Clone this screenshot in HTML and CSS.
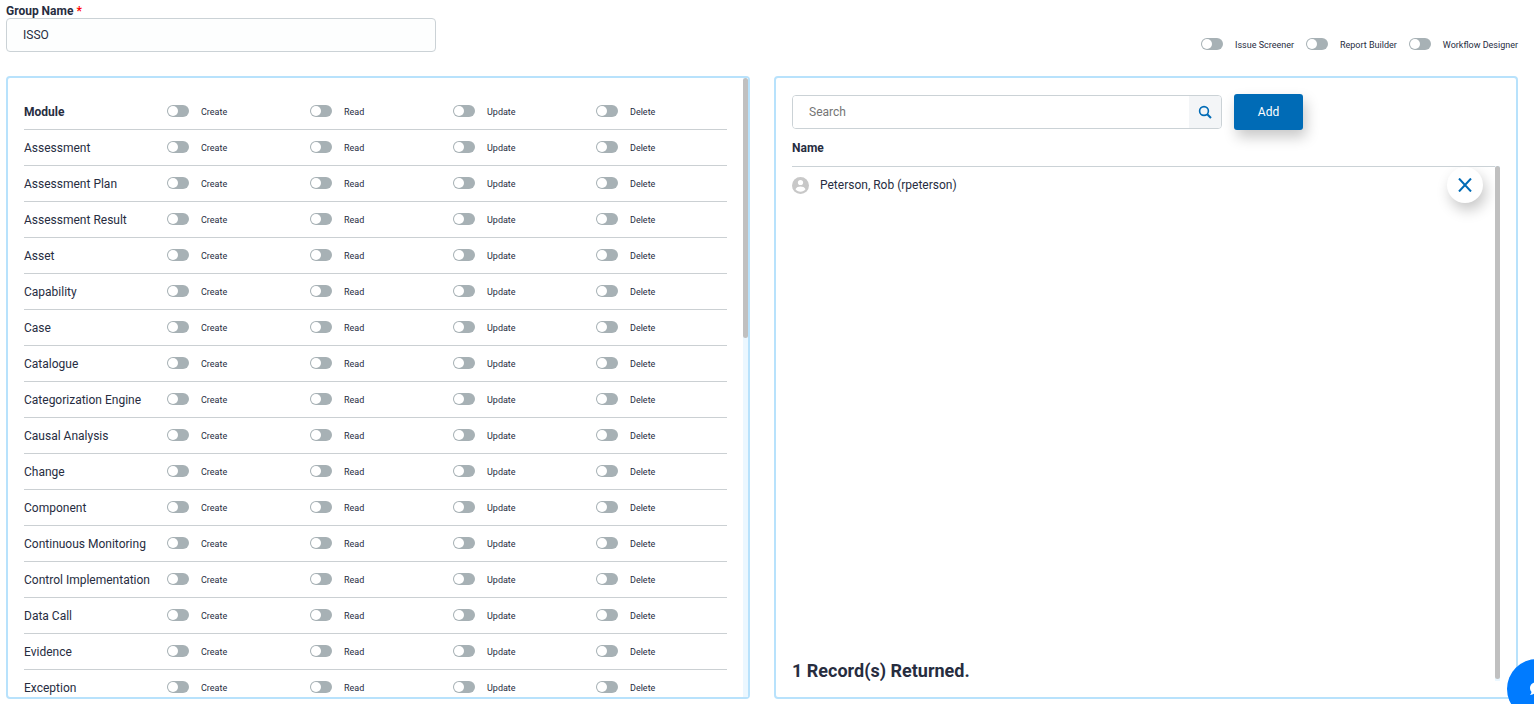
FILE: index.html
```html
<!DOCTYPE html>
<html lang="en">
<head>
    <meta charset="UTF-8">
    <meta name="viewport" content="width=device-width, initial-scale=1.0">
    <title>Group Permissions</title>
    <link rel="stylesheet" href="styles.css">
</head>
<body>
    <header class="group-header">
        <div class="group-name">
            <label for="groupName">Group Name <span class="required">*</span></label>
            <input type="text" id="groupName" class="text-input" value="ISSO">
        </div>
        <div class="group-options">
            <label class="toggle"><input type="checkbox"><span>Issue Screener</span></label>
            <label class="toggle"><input type="checkbox"><span>Report Builder</span></label>
            <label class="toggle"><input type="checkbox"><span>Workflow Designer</span></label>
        </div>
    </header>

    <main class="panels">
        <section class="panel modules-panel">
            <div class="modules-scroll">
                <table class="modules">
                    <thead id="modulesHead"></thead>
                    <tbody id="modulesBody"></tbody>
                </table>
            </div>
            <div class="scrollbar"><div class="thumb modules-thumb"></div></div>
        </section>

        <section class="panel users-panel">
            <form class="search-row">
                <div class="search-box">
                    <input type="text" class="search-input" placeholder="Search" aria-label="Search">
                    <button type="button" class="search-button" aria-label="Search users">
                        <svg width="14" height="14" viewBox="0 0 14 14" fill="none" stroke="currentColor" stroke-width="1.6">
                            <circle cx="6" cy="6" r="4.400"/>
                            <path d="M9.200 9.200l3.800 3.800" stroke-width="2"/>
                        </svg>
                    </button>
                </div>
                <button type="button" class="add-button">Add</button>
            </form>
            <h2 class="users-title">Name</h2>
            <div class="users-list">
                <div class="users-scroll">
                    <ul class="users">
                        <li class="user">
                            <svg class="avatar" width="17" height="17" viewBox="0 0 17 17">
                                <circle cx="8.5" cy="8.5" r="8.5" fill="#c8c8c8"/>
                                <circle cx="8.5" cy="5.500" r="2.600" fill="#fff"/>
                                <path d="M3.500 12.200c.6-2 3.300-2.700 5-2.700s4.400.7 5 2.700c-1.100 1.600-2.900 2.500-5 2.500s-3.900-.9-5-2.500z" fill="#fff"/>
                            </svg>
                            <span class="user-name">Peterson, Rob (rpeterson)</span>
                            <button type="button" class="remove-button" aria-label="Remove user">
                                <svg width="14" height="14" viewBox="0 0 14 14" fill="none" stroke="currentColor" stroke-width="2">
                                    <path d="M1 0.500l12 13M13 0.500l-12 13"/>
                                </svg>
                            </button>
                        </li>
                    </ul>
                    <p class="record-count">1 Record(s) Returned.</p>
                </div>
                <div class="scrollbar"><div class="thumb users-thumb"></div></div>
            </div>
        </section>
    </main>

    <button type="button" class="chat-button" aria-label="Chat">
        <svg width="14" height="14" viewBox="0 0 14 14" fill="#fff">
            <path d="M7 0c3.900 0 7 2.600 7 6s-3.100 6-7 6c-.9 0-1.800-.1-2.600-.4C3.200 12.500 1.600 13 0 13c.9-.9 1.400-1.900 1.500-3C.6 8.900 0 7.500 0 6c0-3.400 3.100-6 7-6z"/>
        </svg>
    </button>

    <script src="script.js"></script>
</body>
</html>
```

FILE: styles.css
```css
* {
    box-sizing: border-box;
}
body {
    margin: 0;
    padding: 4px 16px 5px 6px;
    height: 100vh;
    display: flex;
    flex-direction: column;
    gap: 24px;
    font-family: Roboto, Arial, sans-serif;
    font-size: 12px;
    line-height: 14px;
    color: #272d3f;
    background: #fff;
}
input, button {
    font-family: inherit;
    font-size: 12px;
    color: inherit;
}
button {
    padding: 0;
    border: none;
    cursor: pointer;
}

/* Header */
.group-header {
    display: flex;
    justify-content: space-between;
    align-items: flex-end;
}
.group-name {
    flex: 0 1 430px;
    font-weight: bold;
}
.group-name label {
    display: block;
}
.required {
    color: #f00;
}
.text-input {
    display: block;
    width: 100%;
    height: 34px;
    padding: 0 16px;
    border: 1px solid #cbd2d6;
    border-radius: 4px;
    background: #fdfefe;
}
.group-options {
    display: flex;
    gap: 12px;
}

/* Toggles */
.toggle {
    display: inline-flex;
    align-items: center;
    gap: 12px;
    font-size: 9px;
    line-height: 14px;
    cursor: pointer;
}
.toggle input {
    appearance: none;
    width: 22px;
    height: 12px;
    margin: 0 0 2px;
    padding: 1px;
    border-radius: 6px;
    background: #a7b1b5;
    cursor: pointer;
}
.toggle input::before {
    content: "";
    display: block;
    width: 10px;
    height: 10px;
    border-radius: 50%;
    background: #fff;
}
.toggle input:checked {
    background: #006bb6;
}
.toggle input:checked::before {
    margin-left: auto;
}

/* Panels */
.panels {
    flex: 1;
    min-height: 0;
    display: grid;
    grid-template-columns: 1fr 1fr;
    gap: 24px;
}
.panel {
    display: flex;
    min-height: 0;
    border: 2px solid #b8e2fc;
    border-radius: 4px;
}
.modules-scroll {
    flex: 1;
    padding: 16px 16px 0;
    overflow-y: auto;
    scrollbar-width: none;
}
.modules, .modules thead, .modules tbody {
    display: block;
}
.modules tr {
    display: grid;
    grid-template-columns: repeat(5, 1fr);
    gap: 12px;
    align-items: center;
    height: 36px;
    border-bottom: 1px solid #cbd0d3;
}
.modules th, .modules td {
    display: flex;
    padding: 0;
    font-weight: normal;
    text-align: left;
    white-space: nowrap;
}
.modules thead .module-name {
    font-weight: bold;
}

/* Scrollbars */
.scrollbar {
    width: 5px;
    background: #ebf7ff;
}
.thumb {
    border-radius: 3px;
    background: #c0c0c0;
}
.modules-thumb {
    height: 42%;
}
.users-thumb {
    height: calc(100% - 2px);
}

/* Users */
.users-panel {
    flex-direction: column;
    padding: 16px;
}
.search-row {
    display: flex;
    align-items: center;
    gap: 12px;
}
.search-box {
    flex: 0 1 430px;
    display: flex;
    height: 34px;
    border: 1px solid #cbd2d6;
    border-radius: 4px;
    overflow: hidden;
}
.search-input {
    flex: 1;
    min-width: 0;
    padding: 0 16px;
    border: none;
}
.search-input::placeholder {
    color: #757575;
}
.search-button {
    width: 32px;
    display: flex;
    align-items: center;
    justify-content: center;
    color: #006bb6;
    background: #f3f5f7;
}
.add-button {
    width: 69px;
    height: 36px;
    border-radius: 3px;
    color: #fff;
    background: #006bb6;
    box-shadow: 3px 7px 14px rgba(0, 0, 0, 0.22);
}
.users-title {
    margin: 11px 0;
    font-size: 12px;
    line-height: 14px;
}
.users-list {
    flex: 1;
    min-height: 0;
    display: flex;
}
.users-scroll {
    flex: 1;
    display: flex;
    flex-direction: column;
    justify-content: space-between;
    border-top: 1px solid #cbd2d6;
    overflow-y: auto;
    scrollbar-width: none;
}
.users {
    margin: 0;
    padding: 0;
    list-style: none;
}
.user {
    display: flex;
    align-items: center;
    height: 36px;
    padding-right: 12px;
}
.user-name {
    flex: 1;
    margin-left: 11px;
}
.remove-button {
    width: 36px;
    height: 36px;
    display: flex;
    align-items: center;
    justify-content: center;
    border-radius: 50%;
    color: #006bb6;
    background: #fff;
    box-shadow: 3px 7px 14px rgba(0, 0, 0, 0.22);
}
.record-count {
    margin: 0;
    font-size: 18px;
    font-weight: bold;
    line-height: 20px;
}

.chat-button {
    position: fixed;
    right: -33px;
    bottom: -15px;
    width: 60px;
    height: 60px;
    display: flex;
    align-items: center;
    justify-content: center;
    border-radius: 50%;
    background: #007bff;
}
```

FILE: script.js
```js
const modules = [
    'Assessment', 'Assessment Plan', 'Assessment Result', 'Asset', 'Capability',
    'Case', 'Catalogue', 'Categorization Engine', 'Causal Analysis', 'Change',
    'Component', 'Continuous Monitoring', 'Control Implementation', 'Data Call',
    'Evidence', 'Exception'
];
const permissions = ['Create', 'Read', 'Update', 'Delete'];

function createRow(name, cellType) {
    const row = document.createElement('tr');
    const title = document.createElement('th');
    title.className = 'module-name';
    title.textContent = name;
    row.appendChild(title);

    permissions.forEach(function (permission) {
        const cell = document.createElement(cellType);
        cell.innerHTML = '<label class="toggle"><input type="checkbox"><span>' + permission + '</span></label>';
        row.appendChild(cell);
    });
    return row;
}

document.getElementById('modulesHead').appendChild(createRow('Module', 'th'));

const body = document.getElementById('modulesBody');
modules.forEach(function (name) {
    body.appendChild(createRow(name, 'td'));
});
```
